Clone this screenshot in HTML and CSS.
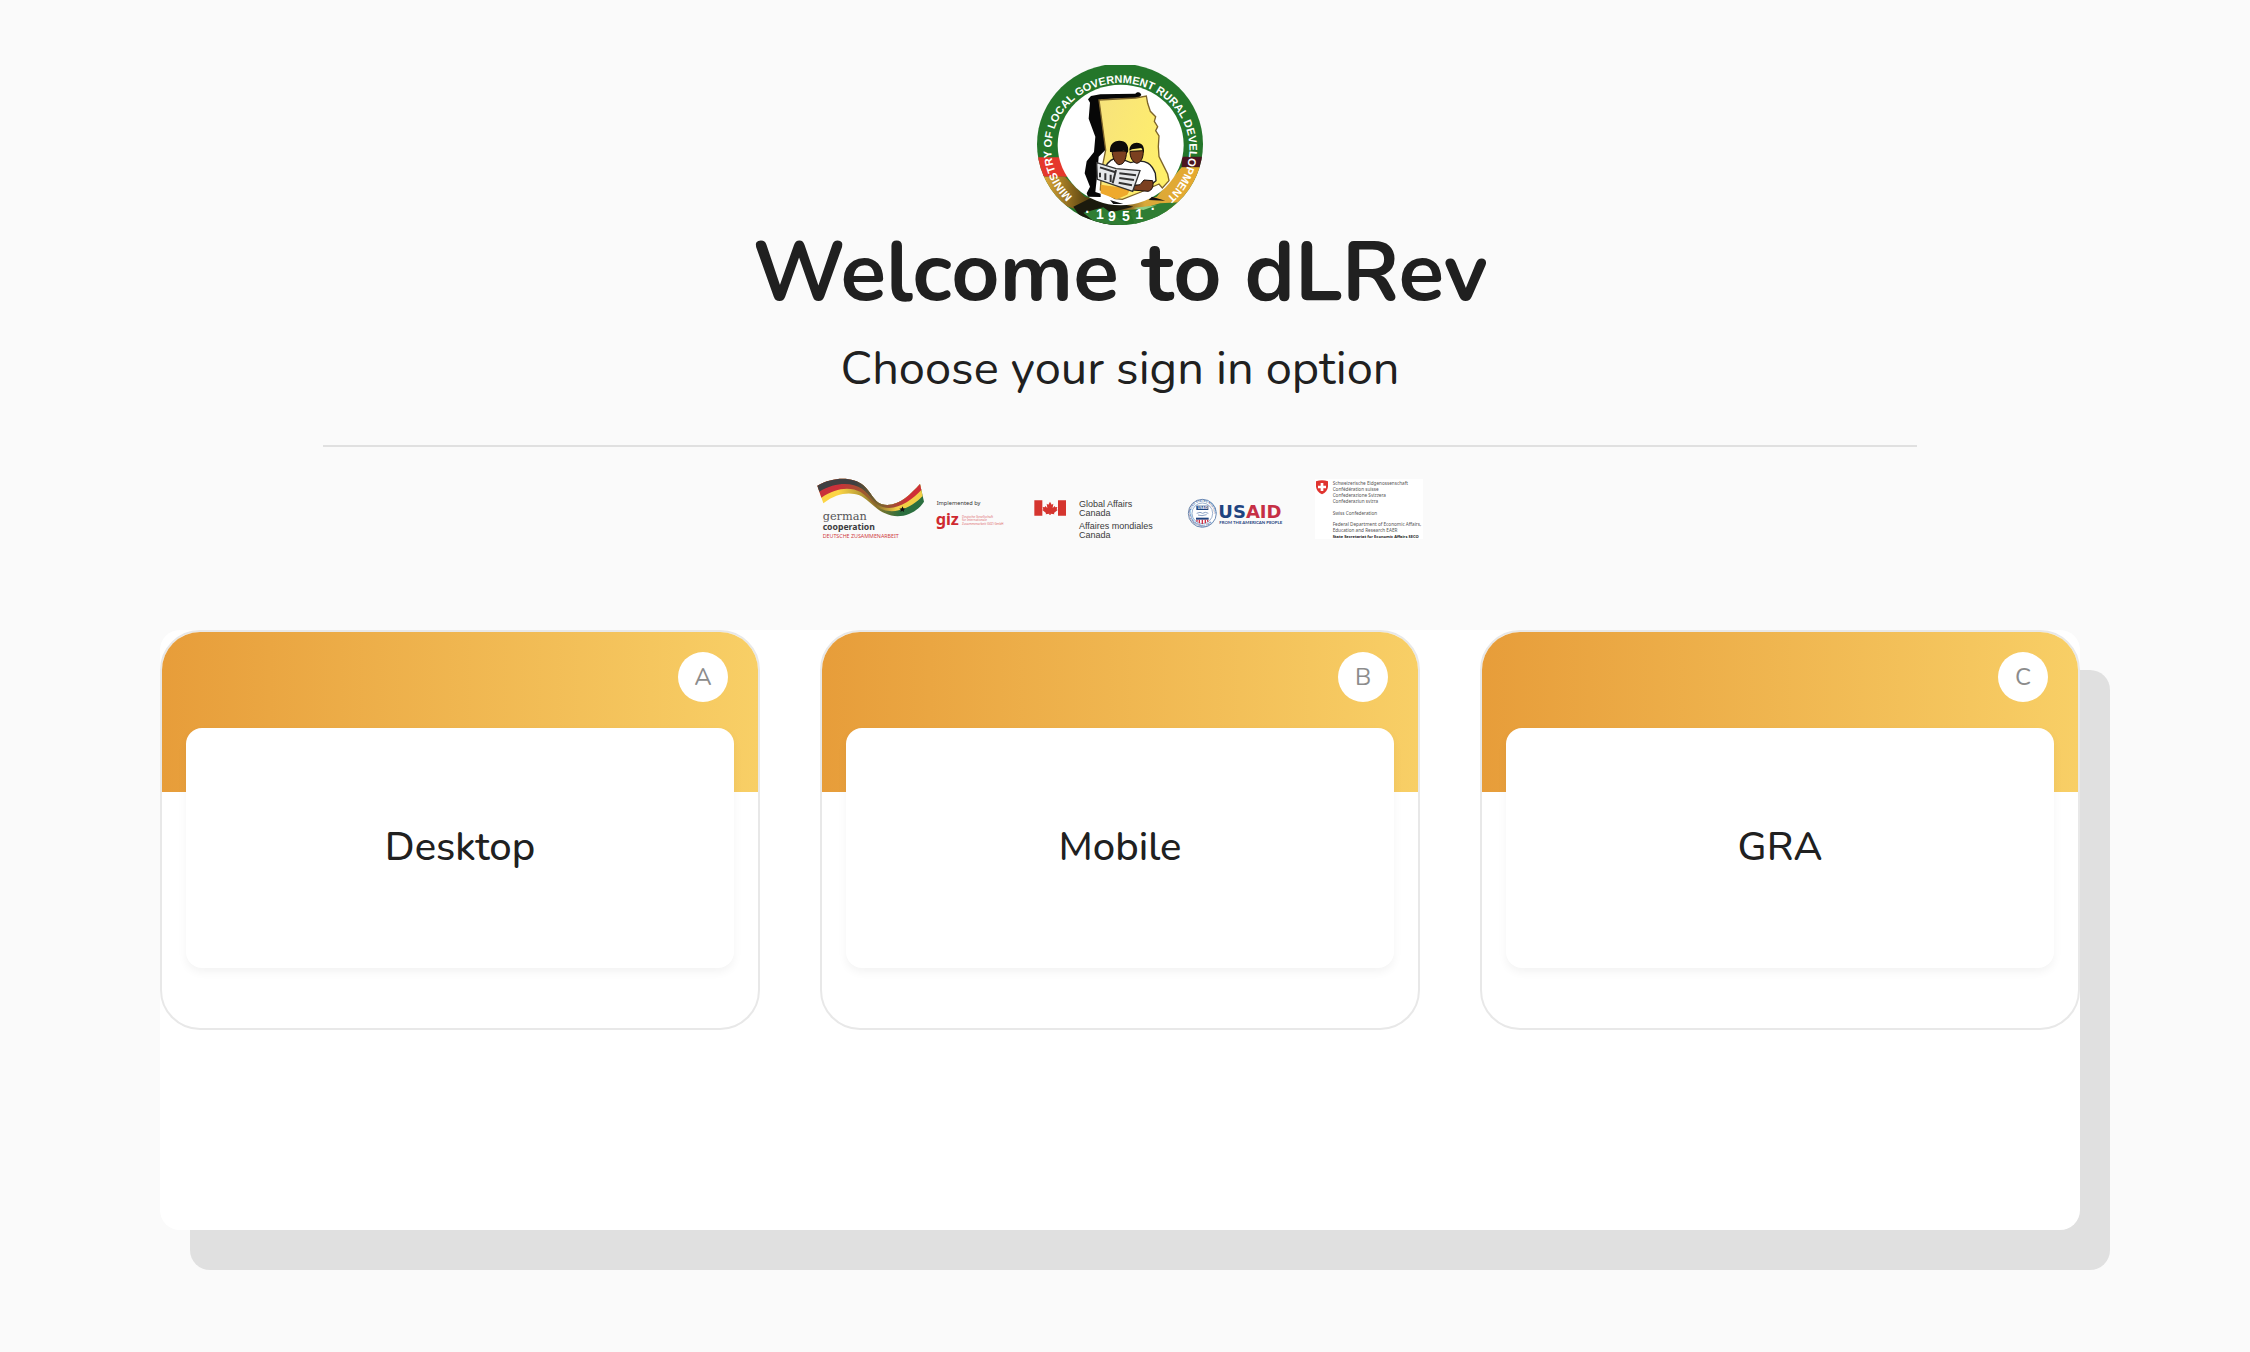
FILE: index.html
```html
<!DOCTYPE html>
<html lang="en">
<head>
    <meta charset="UTF-8">
    <meta name="viewport" content="width=device-width, initial-scale=1.0">
    <title>dLRev</title>
    <link rel="stylesheet" href="styles.css">
</head>
<body>

    <!-- Header -->
    <header class="header">
        <svg class="emblem" viewBox="51 45 498 480" role="img" aria-label="Ministry of Local Government Rural Development">
            <defs>
                <clipPath id="ring"><ellipse cx="300" cy="283" rx="249" ry="242"/></clipPath>
                <linearGradient id="gold" x1="0" x2="1">
                    <stop offset="0" stop-color="#f0b83c"/>
                    <stop offset="0.3" stop-color="#5a4310"/>
                    <stop offset="0.45" stop-color="#2d220c"/>
                    <stop offset="0.65" stop-color="#d9a93a"/>
                    <stop offset="1" stop-color="#e8a92e"/>
                </linearGradient>
                <linearGradient id="land" x1="0" x2="1" y2="0.6">
                    <stop offset="0" stop-color="#f7e27c"/>
                    <stop offset="1" stop-color="#fff06a"/>
                </linearGradient>
                <path id="round" d="M158 440A207 198 0 1 1 444 440"/>
            </defs>
            <g clip-path="url(#ring)">
                <rect x="51" y="40" width="498" height="490" fill="#24762a"/>
                <path fill="#e5372c" d="M51 322h90v58H51z"/>
                <path fill="#4b1420" d="M485 320h70v32h-70z"/>
                <path fill="url(#gold)" d="M51 380h84l60 60 105 26 110-26 75-88h64v80l-80 60-100-15-170 10-100-30z"/>
                <path fill="#1b1a0d" d="M160 470l60-30 120 30-80 20 60 40H200z"/>
                <path fill="#2f7d33" d="M190 488l60-16 80 58H240zM330 486l90-26 80-4-60 50-90 30z"/>
                <path fill="#8fce86" d="M340 474l70-8-40 14z"/>
            </g>
            <ellipse cx="302" cy="285" rx="189" ry="181" fill="#fff"/>
            <path fill="#070707" d="M213 138l28-5 105-2c8-8 16-4 18 4l-8 8-112 5 2 50 14 68-4 34-20 20-4 50-6 56 16 5v10l-38-1-4-10 10-20-16-40 6-36 22-28 4-46-20-54 4-48-6-10z"/>
            <path fill="url(#land)" stroke="#7d642a" stroke-width="4" d="M237 150l110-6 32-6 4 22 8 24 16 16-4 14 10 16-6 12 10 16-2 32 2 30 6 12 20 40 4 20-20 22-10-12-54 24-56 22-22-2-44-26 4-60 12-60z"/>
            <path fill="#eea92c" d="M242 404l90 12-10 18-32 14-20-8-28-10z"/>
            <path fill="#fff" stroke="#222" stroke-width="4" d="M256 352c10-22 24-28 40-28l36 14 16-4c30-4 46 6 58 36l2 22-24 20-60-10-70-10z"/>
            <path fill="#7b4020" stroke="#1a0e08" stroke-width="3" d="M276 302c2 22 8 36 20 42 16 0 22-14 24-40zM330 304c0 20 8 32 20 36 12-2 20-14 20-38zM372 390l26 2c4 16-2 30-14 32l-46-4-8-12 30-4z"/>
            <path fill="#0d0a09" d="M270 306c-2-22 10-34 28-34 20 0 30 14 26 36l-12-6-34 4zM328 302c0-16 10-24 22-24 16 0 24 10 22 30l-8-14-28 4z"/>
            <path fill="#e6e8ea" stroke="#333" stroke-width="4" d="M230 338l58 18 72 6-22 62-106-36z"/>
            <path stroke="#333" stroke-width="6" fill="none" d="M240 352l44 14M240 368v14M256 370v20M272 374v22M298 370l50 6M298 384l44 6M296 398l40 8M288 360l-10 40"/>
            <path fill="#111" d="M396 440l40 12-50-2zM270 450l40 12-30 0z"/>
            <text class="emblem-text" font-size="33"><textPath href="#round">MINISTRY OF LOCAL GOVERNMENT RURAL DEVELOPMENT</textPath></text>
            <text class="emblem-text" font-size="42" x="196 228 264 306 346 392" y="500 506 514 514 506 492">·1951·</text>
        </svg>
        <h1 class="title">Welcome to dLRev</h1>
        <p class="subtitle">Choose your sign in option</p>
    </header>

    <hr class="divider">

    <!-- Partner logos -->
    <div class="partners">
        <svg class="partner partner-german" viewBox="51 57 561 180" role="img" aria-label="German cooperation, implemented by giz">
            <defs>
                <linearGradient id="r1" gradientUnits="userSpaceOnUse" x1="52" x2="372" y1="0" y2="0">
                    <stop offset="0.35" stop-color="#3f3f41"/><stop offset="0.58" stop-color="#77642f"/><stop offset="0.85" stop-color="#cf2f37"/>
                </linearGradient>
                <linearGradient id="r2" gradientUnits="userSpaceOnUse" x1="52" x2="372" y1="0" y2="0">
                    <stop offset="0.2" stop-color="#c9313a"/><stop offset="0.55" stop-color="#8a6a2b"/><stop offset="0.75" stop-color="#f2cf45"/>
                </linearGradient>
                <linearGradient id="r3" gradientUnits="userSpaceOnUse" x1="52" x2="372" y1="0" y2="0">
                    <stop offset="0.2" stop-color="#fcd545"/><stop offset="0.55" stop-color="#8a752b"/><stop offset="0.78" stop-color="#2b6f3f"/>
                </linearGradient>
            </defs>
            <path fill="url(#r3)" d="M52 77C105 48 160 52 190 76C212 94 222 126 245 133C290 145 330 105 360 72L372 125C350 160 300 182 255 160C225 148 205 118 178 106C150 95 110 98 70 130Z"/>
            <path fill="url(#r2)" d="M52 77C105 48 160 52 190 76C212 94 222 126 245 133C290 145 330 105 360 72L368 108C340 138 290 164 250 149C222 142 210 114 182 96C152 80 108 82 64 113Z"/>
            <path fill="url(#r1)" d="M52 77C105 48 160 52 190 76C212 94 222 126 245 133C290 145 330 105 360 72L364 90C335 120 290 154 248 141C222 134 212 104 186 86C155 66 105 66 58 95Z"/>
            <path fill="#111" d="M308 139l2 6 6 1-5 4 2 6-6-4-6 4 2-6-5-4 7-1z"/>
            <text class="serif" x="68" y="179" font-size="34" fill="#555557">german</text>
            <text class="humanist" x="68" y="209" font-size="26" font-weight="700" fill="#3c3c3e">cooperation</text>
            <text class="humanist" x="68" y="235" font-size="16" fill="#cf3a42">DEUTSCHE ZUSAMMENARBEIT</text>
            <text class="humanist" x="410" y="134" font-size="17" fill="#333">Implemented by</text>
            <text class="humanist" x="407" y="196" font-size="49" font-weight="700" fill="#cf2a30">giz</text>
            <g class="humanist" font-size="9" fill="#dd6a6e">
                <text x="486" y="173">Deutsche Gesellschaft</text>
                <text x="486" y="184">für Internationale</text>
                <text x="486" y="196">Zusammenarbeit (GIZ) GmbH</text>
            </g>
        </svg>
        <svg class="partner partner-canada" viewBox="72 57 369 180" role="img" aria-label="Global Affairs Canada">
            <path fill="#d5352f" d="M73 121h24v46H73zM144 121h24v46h-24z"/>
            <path fill="#d5352f" d="M120 125l5 9 5-3-2 13 6-6 2 4 6-1-2 7 3 2-11 9 1 4-11-2v4h-4v-4l-11 2 1-4-11-9 3-2-2-7 6 1 2-4 6 6-2-13 5 3z"/>
            <g class="sans" font-size="27" fill="#3a3a3a">
                <text x="207" y="140">Global Affairs</text>
                <text x="207" y="168">Canada</text>
                <text x="207" y="207">Affaires mondiales</text>
                <text x="207" y="235">Canada</text>
            </g>
        </svg>
        <svg class="partner partner-usaid" viewBox="51 57 294 180" role="img" aria-label="USAID, from the American people">
            <defs>
                <path id="sealTop" d="M62 160A35 35 0 0 1 132 160"/>
                <path id="sealBottom" d="M57 160A40 40 0 0 0 137 160"/>
            </defs>
            <circle cx="97" cy="160" r="42" fill="#fff" stroke="#6d8bb5" stroke-width="3"/>
            <circle cx="97" cy="160" r="31" fill="#fff" stroke="#6d8bb5" stroke-width="2"/>
            <g class="sans" font-size="9" font-weight="700" fill="#456a9f">
                <text><textPath href="#sealTop">UNITED STATES AGENCY</textPath></text>
                <text><textPath href="#sealBottom">INTERNATIONAL DEV.</textPath></text>
            </g>
            <path fill="#1f4480" d="M79 137h36v13H79z"/>
            <text class="sans" x="83" y="147" font-size="10" font-weight="700" fill="#fff">USAID</text>
            <path fill="none" stroke="#8aa1c4" stroke-width="3" d="M80 160l10-3 8 3 8-3 9 3M84 165l12 2 14-3"/>
            <path fill="#1f4480" d="M78 173h38v6H78z"/>
            <path fill="none" stroke="#cf2f45" stroke-width="4" d="M81 179v6M88 179v11M97 179v13M106 179v11M113 179v6"/>
            <text class="wide" x="145" y="173" font-size="54" font-weight="700" fill="#1f4480">US<tspan fill="#c62f45">AID</tspan></text>
            <text class="gill" x="148" y="193" font-size="13" font-weight="700" fill="#1f4480">FROM THE AMERICAN PEOPLE</text>
        </svg>
        <svg class="partner partner-swiss" viewBox="435 57 324 180" role="img" aria-label="Swiss Confederation">
            <path fill="#fff" d="M435 57h324v180H435z"/>
            <path fill="#e0342f" d="M438 64q18-6 36 0v16q-2 16-18 23q-16-7-18-23z"/>
            <path fill="#fff" d="M452 69h8v8h8v8h-8v8h-8v-8h-8v-8h8z"/>
            <g class="humanist" font-size="14" fill="#555">
                <text x="488" y="75">Schweizerische Eidgenossenschaft</text>
                <text x="488" y="93">Confédération suisse</text>
                <text x="488" y="110">Confederazione Svizzera</text>
                <text x="488" y="128">Confederaziun svizra</text>
                <text x="488" y="164">Swiss Confederation</text>
                <text x="488" y="199">Federal Department of Economic Affairs,</text>
                <text x="488" y="217">Education and Research EAER</text>
                <text x="488" y="234" font-size="12" font-weight="700" fill="#222">State Secretariat for Economic Affairs SECO</text>
            </g>
        </svg>
    </div>

    <!-- Sign in options -->
    <main class="panel">
        <a class="card" href="#desktop">
            <span class="card-top"><span class="badge">A</span></span>
            <span class="card-body">Desktop</span>
        </a>
        <a class="card" href="#mobile">
            <span class="card-top"><span class="badge">B</span></span>
            <span class="card-body">Mobile</span>
        </a>
        <a class="card" href="#gra">
            <span class="card-top"><span class="badge">C</span></span>
            <span class="card-body">GRA</span>
        </a>
    </main>

</body>
</html>
```

FILE: styles.css
```css
* {
    box-sizing: border-box;
}
body {
    font-family: Nunito, "Open Sans", sans-serif;
    margin: 0;
    padding: 65px 170px 80px 160px;
    background: #fafafa;
    color: #202020;
}
.header {
    display: flex;
    flex-direction: column;
    align-items: center;
    text-align: center;
}
.emblem {
    width: 166px;
    height: 160px;
}
.emblem-text {
    font-family: "Liberation Sans", sans-serif;
    font-weight: 700;
    fill: #fff;
}
.title {
    margin: 0;
    font-size: 84px;
    font-weight: 700;
    line-height: 96px;
}
.subtitle {
    margin: 0;
    padding-top: 16px;
    font-size: 47px;
    line-height: 64px;
}
.divider {
    width: 83%;
    height: 2px;
    margin: 44px auto 32px;
    border: none;
    background: #e0e0e0;
}
.partners {
    display: flex;
    justify-content: center;
    gap: 30px;
    margin-bottom: 91px;
}
.partner {
    height: 60px;
    overflow: visible;
}
.partner-german {
    width: 187px;
}
.partner-canada {
    width: 123px;
}
.partner-usaid {
    width: 98px;
}
.partner-swiss {
    width: 108px;
}
.serif {
    font-family: "DejaVu Serif", serif;
}
.humanist {
    font-family: "Noto Sans", sans-serif;
}
.sans {
    font-family: "Liberation Sans", sans-serif;
}
.wide {
    font-family: "DejaVu Sans", sans-serif;
}
.gill {
    font-family: Lato, sans-serif;
}
.panel {
    display: grid;
    grid-template-columns: repeat(3, 1fr);
    gap: 60px;
    align-items: start;
    min-height: 600px;
    background: #fff;
    border-radius: 20px;
    box-shadow: 30px 40px 0 #e0e0e0;
}
.card {
    display: block;
    height: 400px;
    overflow: hidden;
    border: 2px solid #e8e8e8;
    border-radius: 40px;
    background: #fff;
    color: inherit;
    text-decoration: none;
}
.card-top {
    display: flex;
    justify-content: flex-end;
    height: 160px;
    padding: 20px 30px;
    background: linear-gradient(90deg, #e79d3a, #f8cf66);
}
.badge {
    display: flex;
    align-items: center;
    justify-content: center;
    width: 50px;
    height: 50px;
    border-radius: 50%;
    background: #fff;
    color: #8c8c8c;
    font-size: 24px;
}
.card-body {
    display: flex;
    align-items: center;
    justify-content: center;
    height: 240px;
    margin: -64px 24px 0;
    padding-bottom: 2px;
    border-radius: 16px;
    background: #fff;
    box-shadow: 0 4px 10px rgba(0, 0, 0, 0.05);
    font-size: 40px;
    font-weight: 500;
}
```
